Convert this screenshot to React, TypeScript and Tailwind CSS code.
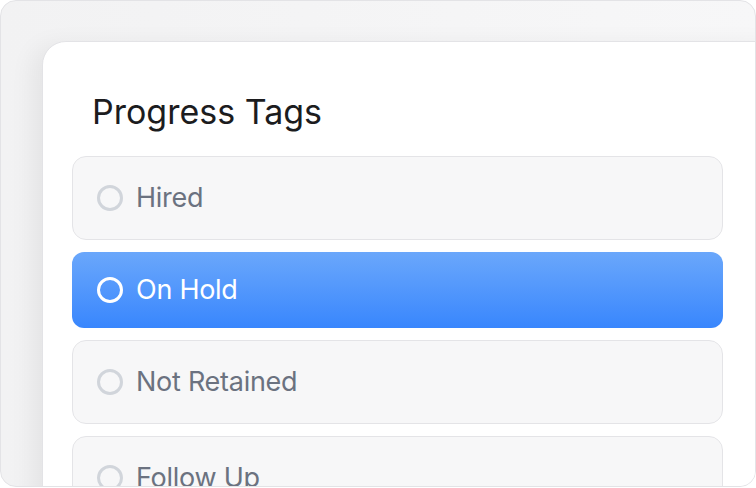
import React from 'react';

const TAGS = [
  { label: 'Hired', active: false },
  { label: 'On Hold', active: true },
  { label: 'Not Retained', active: false },
  { label: 'Follow Up', active: false },
];

const TagRow: React.FC<{ label: string; active: boolean }> = ({ label, active }) => {
  if (active) {
    return (
      <div className="h-[76px] flex items-center gap-[13px] pl-[25px] rounded-[12px] bg-gradient-to-b from-[#6aa7fb] to-[#3886fd]">
        <span className="w-[26px] h-[26px] rounded-full border-[3px] border-white shrink-0" />
        <span className="text-[27px] text-white tracking-[-0.01em]">{label}</span>
      </div>
    );
  }
  return (
    <div className="h-[84px] flex items-center gap-[13px] pl-[24px] rounded-[14px] border border-[#e4e4e7] bg-[#f7f7f8] shrink-0">
      <span className="w-[26px] h-[26px] rounded-full border-[3px] border-[#d1d5db] shrink-0" />
      <span className="text-[27px] text-[#6b7280] tracking-[-0.01em]">{label}</span>
    </div>
  );
};

const App: React.FC = () => {
  return (
    <div className="w-[756px] h-[488px] bg-white font-['Inter',sans-serif]">
      <div className="w-[756px] h-[487px] rounded-[16px] border border-[#e3e3e6] bg-gradient-to-r from-[#f2f2f3] to-[#f7f7f8] overflow-hidden pl-[41px] pt-[40px]">
        <div className="w-[739px] h-[480px] rounded-tl-[24px] border border-[#e3e3e6] bg-white shadow-[-10px_4px_24px_rgba(0,0,0,0.06)] pt-[49px] pl-[29px]">
          <h1 className="pl-[20px] text-[34px] leading-[41px] text-[#1c1c1e]">Progress Tags</h1>
          <div className="mt-[24px] w-[651px] flex flex-col gap-[12px]">
            {TAGS.map(t => (
              <TagRow key={t.label} label={t.label} active={t.active} />
            ))}
          </div>
        </div>
      </div>
    </div>
  );
};

export default App;
